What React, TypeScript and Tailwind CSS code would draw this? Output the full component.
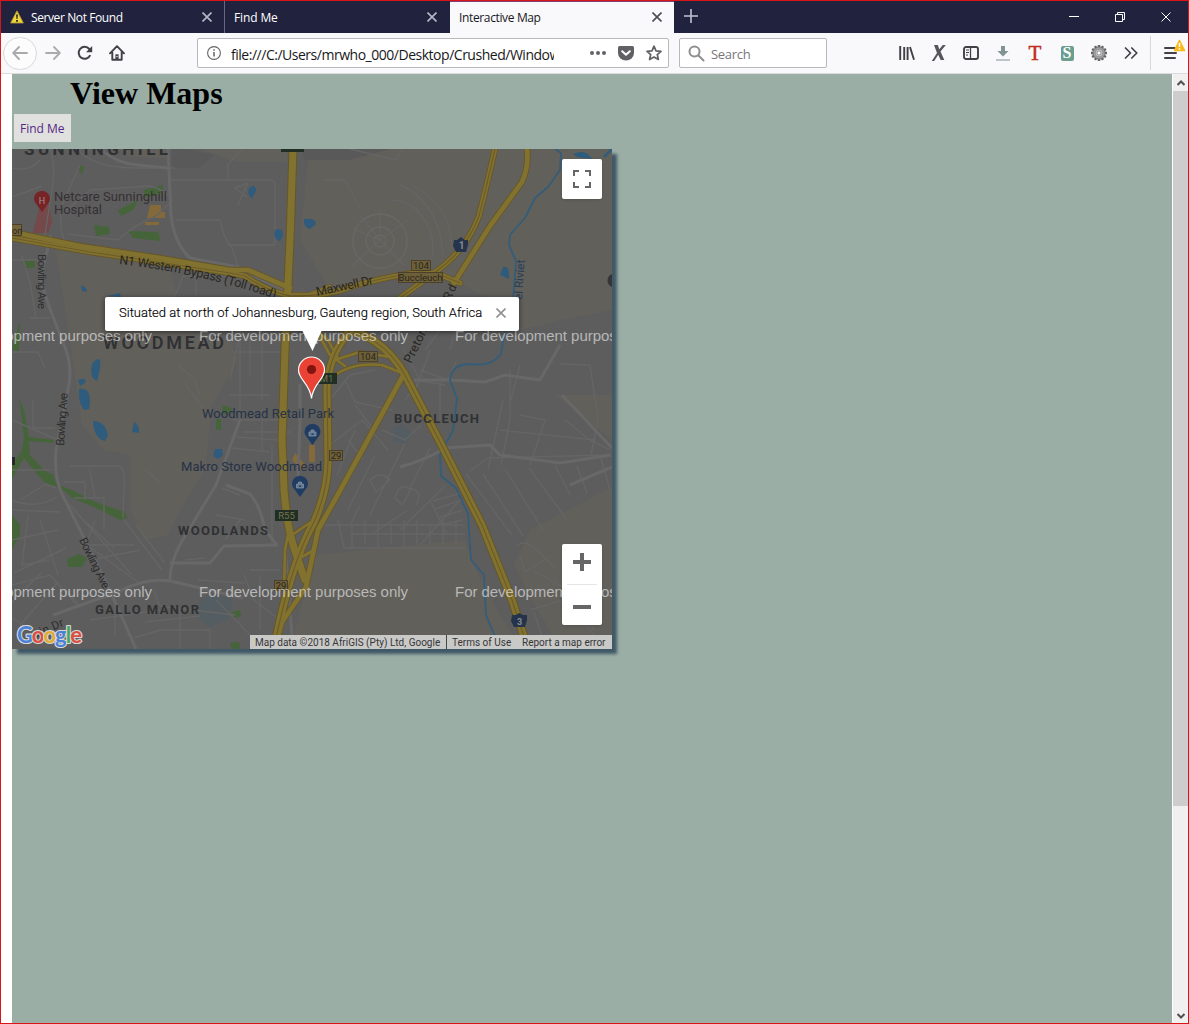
import React from "react";

const ui = "font-['Open_Sans','Noto_Sans',sans-serif]";

function Cross({ color, size = 10, w = 1.6 }: { color: string; size?: number; w?: number }) {
  return (
    <svg width={size} height={size} viewBox="0 0 10 10" stroke={color} strokeWidth={w} fill="none">
      <path d="M.5 .5 9.5 9.5M9.5 .5 .5 9.5" />
    </svg>
  );
}

function TabBar() {
  return (
    <div className={`flex h-8 shrink-0 bg-[#20223e] text-[12px] text-white ${ui}`}>
      <div className="flex w-[224px] items-center border-r border-[#66687d] pl-[9px] pr-3">
        <svg width="14" height="14" viewBox="0 0 14 14" className="mr-[7px]">
          <path d="M7 .8 13.4 13H.6Z" fill="#f1d43a" stroke="#a99335" strokeWidth=".9" strokeLinejoin="round" />
          <path d="M6.1 4.5h1.8L7.5 9h-1ZM6.1 10h1.8v1.7H6.1Z" fill="#222" />
        </svg>
        <span className="mt-0.5 whitespace-nowrap tracking-[-0.400px]">Server Not Found</span>
        <span className="ml-auto"><Cross color="#b7b8c7" /></span>
      </div>
      <div className="flex w-[225px] items-center pl-[9px] pr-[13px]">
        <span className="mt-0.5 tracking-[-0.120px]">Find Me</span>
        <span className="ml-auto"><Cross color="#b7b8c7" /></span>
      </div>
      <div className="flex w-[224px] items-center border-t border-[#813f76] bg-[#f9f9fb] pl-[9px] pr-[12px] text-[#17171b]">
        <span className="tracking-[-0.360px]">Interactive Map</span>
        <span className="ml-auto pb-px"><Cross color="#4b4b52" /></span>
      </div>
      <svg width="14" height="14" viewBox="0 0 14 14" className="ml-[10px] mt-2" stroke="#c1c2d0" strokeWidth="1.6">
        <path d="M7 0v14M0 7h14" />
      </svg>
      <div className="ml-auto flex">
        <div className="flex w-[46px] items-center justify-center"><svg width="10" height="10"><path d="M0 4.5h10" stroke="#fff" /></svg></div>
        <div className="flex w-[46px] items-center justify-center">
          <svg width="10" height="10" fill="none" stroke="#fff"><path d="M.5 2.5h7v7h-7ZM2.5 2.5v-2h7v7h-2" /></svg>
        </div>
        <div className="flex w-[45px] items-center justify-center"><Cross color="#fff" w={1} /></div>
      </div>
    </div>
  );
}

function Slot({ children }: { children: React.ReactNode }) {
  return <div className="flex w-8 items-center justify-center">{children}</div>;
}

const teeth = Array.from({ length: 12 }, (_, i) => i * 30);

function Toolbar() {
  return (
    <div className={`flex h-[41px] shrink-0 items-center border-b border-[#dcdcde] bg-[#f9f9fb] ${ui}`}>
      <div className="ml-[2px] flex h-[33px] w-[34px] items-center justify-center rounded-full border border-[#d8d8da] bg-[#fcfcfd]">
        <svg width="16" height="14" viewBox="0 0 16 14" fill="none" stroke="#a9a9ab" strokeWidth="1.8" strokeLinecap="round" strokeLinejoin="round"><path d="M15 7H1.5M7 1 1.2 7 7 13" /></svg>
      </div>
      <Slot>
        <svg width="16" height="14" viewBox="0 0 16 14" fill="none" stroke="#ababad" strokeWidth="1.8" strokeLinecap="round" strokeLinejoin="round"><path d="M1 7h13.5M9 1l5.8 6L9 13" /></svg>
      </Slot>
      <Slot>
        <svg width="16" height="16" viewBox="0 0 16 16" fill="none" stroke="#414146" strokeWidth="2"><path d="M13.2 10.2A6 6 0 1 1 12.3 4l1.2 1.3" /><path d="M15.2 1v6.2H9Z" fill="#414146" stroke="none" /></svg>
      </Slot>
      <Slot>
        <svg width="16" height="16" viewBox="0 0 16 16" fill="none" stroke="#414146" strokeWidth="1.9" strokeLinejoin="round" strokeLinecap="round"><path d="M1 8.3 8 1.2l7 7.1M3.3 7v7.8h9.4V7" /><path d="M6.4 14V9.3h3.2V14Z" fill="#414146" stroke="none" /><path d="M7.6 11.6h.8" stroke="#fff" strokeWidth=".8" /></svg>
      </Slot>
      <div className="ml-16 flex h-[30px] w-[472px] items-center rounded-[2px] border border-[#b9b9bb] bg-white">
        <svg width="14" height="14" viewBox="0 0 14 14" className="ml-[9px] shrink-0" fill="none" stroke="#636367"><circle cx="7" cy="7" r="6.4" strokeWidth="1.1" /><path d="M7 6v4.4M7 3.2v1.5" strokeWidth="1.5" /></svg>
        <div className="mt-0.5 ml-[10px] w-[323px] shrink-0 overflow-hidden whitespace-nowrap text-[14px] tracking-[-0.480px] text-[#18181b]">file:///C:/Users/mrwho_000/Desktop/Crushed/Windows</div>
        <svg width="18" height="6" className="ml-[35px] shrink-0" fill="#636367"><circle cx="3" cy="3" r="2" /><circle cx="9" cy="3" r="2" /><circle cx="15" cy="3" r="2" /></svg>
        <svg width="16" height="15" viewBox="0 0 16 15" className="ml-[11px] shrink-0"><path d="M1.5 0h13Q16 0 16 1.6V7a8 7.5 0 0 1-16 0V1.6Q0 0 1.5 0Z" fill="#606065" /><path d="m4.2 5.2 3.8 3.6 3.800-3.600" fill="none" stroke="#fff" strokeWidth="2" strokeLinecap="round" strokeLinejoin="round" /></svg>
        <svg width="16" height="16" viewBox="0 0 16 16" className="ml-3 shrink-0" fill="none" stroke="#606065" strokeWidth="1.7" strokeLinejoin="round"><path d="m8 1.2 2 4.600 5 .5-3.700 3.300 1.100 4.900L8 12l-4.400 2.500 1.100-4.900L1 6.300l5-.5Z" /></svg>
      </div>
      <div className="ml-[10px] flex h-[30px] w-[148px] items-center rounded-[2px] border border-[#b9b9bb] bg-white pl-2 text-[13px] text-[#77777a]">
        <svg width="17" height="17" viewBox="0 0 17 17" className="mr-[6px]" fill="none" stroke="#8e8e90" strokeWidth="2" strokeLinecap="round"><circle cx="6.5" cy="6.5" r="5" /><path d="m10.5 10.5 5 5" /></svg>
        <span className="mt-[3px] tracking-[-0.300px]">Search</span>
      </div>
      <div className="ml-[64px] flex">
        <Slot><svg width="16" height="14" viewBox="0 0 16 14" stroke="#414146" strokeWidth="1.9" fill="none"><path d="M1.200 0v14M5.200 1v13M8.600 1v13M11 1l4 12.700" /></svg></Slot>
        <Slot><svg width="16" height="16" viewBox="0 0 16 16"><path d="M3 0h3.800L8.300 4.200 11.800 0h3L9.500 6.600 13.300 15H9.700L7.200 9.800 3.200 16H.8L6 8Z" fill="#55555a" /></svg></Slot>
        <Slot><svg width="16" height="14" viewBox="0 0 16 14" fill="none" stroke="#414146"><rect x="1" y="1" width="14" height="12" rx="2" strokeWidth="1.9" /><path d="M7.500 1v12" strokeWidth="1.3" /><path d="M3 4h3M3 6.500h3M3 9h2" strokeWidth="1.1" /></svg></Slot>
        <Slot><svg width="14" height="16" viewBox="0 0 14 16" fill="#819491"><path d="M5 1h4v5h3.500L7 11.600 1.500 6H5ZM0 14.500h14v1H0Z" /></svg></Slot>
        <Slot><span className="mt-[-3px] h-5 font-['Liberation_Serif',serif] text-[21px] leading-[22px] text-[#c02c1f] [-webkit-text-stroke:.5px_#c02c1f]">T</span></Slot>
        <Slot><span className="flex h-[15px] w-[13px] items-center justify-center rounded-[2px] bg-[#6b9e8e] font-['Liberation_Serif',serif] text-[16px] leading-none font-bold text-white">S</span></Slot>
        <Slot>
          <svg width="16" height="16" viewBox="-8 -8 16 16">
            {teeth.map((a) => <rect key={a} x="-1.200" y="-8" width="2.400" height="3" fill="#626264" transform={`rotate(${a})`} />)}
            <circle r="6.200" fill="#9c9c9e" stroke="#68686a" strokeWidth=".8" /><circle r="3.800" fill="#c9c9cb" stroke="#838385" strokeWidth=".6" /><circle r="2" fill="#fff" stroke="#777" strokeWidth=".7" />
          </svg>
        </Slot>
        <Slot><svg width="14" height="12" viewBox="0 0 14 12" fill="none" stroke="#414146" strokeWidth="1.700" strokeLinecap="round" strokeLinejoin="round"><path d="m1.500 1 5 5-5 5M7.800 1l5 5-5 5" /></svg></Slot>
      </div>
      <div className="ml-[3px] h-[34px] w-px bg-[#d8d8db]" />
      <svg width="24" height="30" viewBox="0 0 24 30" className="ml-[12px]">
        <path d="M2 10h10M2 15h11M2 20h10" stroke="#414146" strokeWidth="2" strokeLinecap="round" />
        <path d="m16.500 2.500 5 10H11.500Z" fill="#f9b91b" stroke="#f9b91b" strokeWidth="1.500" strokeLinejoin="round" />
        <path d="M16.500 5v4M16.500 10.300v1.400" stroke="#fff" strokeWidth="1.500" />
      </svg>
    </div>
  );
}

const localRoads = [
  "M50 149Q56 165 52 190L44 240M78 149Q90 166 130 168H175M12 168Q30 172 40 160M12 197 42 186M80 165 62 205Q58 232 66 242L140 252 176 260",
  "M66 210Q80 200 90 190L150 186Q166 190 172 201L156 216Q134 225 118 240L68 234",
  "M168 180H270Q275 180 275 186V245H230M228 180V164L242 149M247 197 235 188 248 183 238 205",
  "M176 220H220Q224 240 232 248L238 266M12 260H38M22 256 30 282 36 318M30 318H50M175 296 183 276H270M196 276V296",
  "M12 352H38L45 368M33 400V428H55M12 420 58 440M12 470H50M20 500 46 484 56 488M12 500Q35 510 57 497",
  "M70 466H120Q126 470 124 488L123 518M64 482H85V500M74 498H104V530M90 470 95 498M78 515 114 548M70 505 132 575M95 520 86 545M80 545H134M90 560 140 550M80 540 138 582",
  "M12 510 60 512M12 540 58 530M28 515 22 565 50 560M40 520 58 575M14 573 66 548M12 585 50 575 76 604M12 602 42 572M20 625 58 582M12 618 60 646M66 590 80 606",
  "M124 520 162 570M136 525 165 563M115 600V635M90 620 160 610M134 638 160 630H210V649M154 590 160 606 235 615M180 607V649M145 622 200 616",
  "M230 380 236 350 242 330M240 330V420M232 420H280M236 352H280M250 330V375M262 330V400M230 395H270M243 432H290M236 437 278 440M262 410V450M232 448 270 452",
  "M178 365 195 380 200 395M186 385 203 408M145 470 160 482M272 445V545M222 488 240 495M216 515 245 520M240 520 225 540",
  "M250 570H280M260 575V630M244 575 254 600 280 620M216 600 260 645M185 560 205 558M198 580 245 583",
  "M350 149 396 160 402 149M324 180H345L360 208M360 215 380 240 352 266M380 240V210M380 240 408 220M380 240 405 266M380 240 356 230",
  "M390 200Q422 200 432 238Q434 254 430 265M400 185Q440 202 443 256M412 185Q450 205 452 245",
  "M378 330 370 320H415M440 300V330L425 350M455 306V330L450 350M404 350 420 380 405 400M430 350 415 392",
  "M330 400 350 375 375 370M345 380 355 402 392 410M355 405 374 430M415 380 445 385M420 370 448 380 456 362M440 382V420",
  "M330 445 362 420 388 450M348 440 363 459M382 430 405 440 421 425M355 430 337 475M375 455 348 510M405 443 370 515M430 448 410 488Q424 492 416 505M370 480Q380 470 390 480L376 492ZM395 498Q400 480 411 490L402 505ZM360 505 350 526M408 510 370 535M446 485 400 530M460 500 420 545",
  "M323 525H465M338 520 344 548H465M352 525V548M365 520V544M378 520V548M391 523V544M404 520V548M417 520V545M430 525V545M443 520V544M456 520V545M350 534H465",
  "M433 501 462 493M435 509 462 500M438 518 463 510M441 525 463 520M430 500 447 535",
  "M510 370V420L501 465M520 365 510 403M503 400 488 470M520 415 545 420 530 465M560 364 590 365 598 420 590 460M500 430 595 440M565 420 590 440 610 450",
  "M470 471 488 458 610 455M466 474 512 535M483 474 523 536M505 469 543 530M529 468 567 520M555 465 570 495M577 466 587 493M600 455 610 490",
  "M518 545Q526 540 534 548L555 567M520 555 525 572 550 556M534 571 568 590 594 630M556 590 524 590M530 610 563 600M534 612 546 649M570 600 600 645",
];

const mediumRoads = [
  "M100 149Q118 164 138 165L168 168",
  "M168 149 171 215Q174 243 190 258L238 267Q260 280 288 292",
  "M51 235 40 280Q50 310 62 340Q74 365 68 390L56 450Q54 474 61 492L90 550Q106 580 136 649",
  "M53 615 120 591Q152 574 183 584L243 598M170 580Q170 560 185 536L216 485 240 420M226 485 250 494Q260 505 265 530L277 545",
  "M300 384 300 420 298 480M170 563H210L224 546 278 545",
  "M400 467Q426 460 445 448L490 445 500 455 560 463 611 455",
  "M570 485 612 467",
  "M414 380H450L485 382 505 375 540 380 560 345",
  "M285 545 293 649M562 395 612 448",
];

const highways = [
  "M12 238 90 252 170 264 230 273 245 276Q265 290 290 296Q330 296 350 287Q384 277 420 272L436 273 460 283",
  "M12 232 80 246 160 258 230 270 248 270 290 288",
  "M293 149 290 240 285 350 282 440 284 490Q287 525 293 545L305 580",
  "M495 149Q488 180 479 216Q466 251 434 273L400 298",
  "M527 149Q529 167 522 182L490 226 454 283",
  "M330 286 310 294H292",
  "M350 331Q328 355 327 390L328 460Q328 490 314 522Q290 565 274 649",
  "M330 325Q381 332 405 375L440 442 482 525 512 600 528 649",
  "M405 372 342 487 318 530 306 587 282 622 277 640",
  "M331 378Q350 362 382 365L407 375M316 330 330 355 345 366",
  "M310 325 328 340 338 359L360 352 390 357",
  "M292 535 311 522M290 525 285 550 284 590M290 525 302 570",
  "M304 575 300 558 314 550",
];

const branch = (i: number) => i === 5 || i > 8;
const wide = (i: number) => i === 2 || i === 6 || i === 7;

const water = [
  "M249 188q7-5 7 3l-4 7q-5-2-3-10Z", "M275 230q8-3 8 5l-3 6q-8-2-5-11Z", "M304 219q12-1 12 5l-6 5q-7-2-6-10Z",
  "M92 364q10-12 8 5l-3 12q-8-3-5-17Z", "M78 380q10-3 7 3l-5 3ZM79 389q14-2 10 20l-5 1q-6-7-5-21Z",
  "M93 421q12 0 15 14l-3 6q-11-2-12-20Z", "M134 422q6 4 5 11l-7-1ZM215 449h7l1 6-5 4-5-3Z",
  "M503 267q7-2 6 12l-9-4ZM573 154q13-6 19 5l-15-2ZM108 296l12-3 1 4ZM81 285l5 3 1 4-5-1Z",
];

const park = [
  "M19 398 24 410 29 437 54 440 53 443 29 441 30 455 44 470 53 475 56 484 72 490 95 502 125 512 127 518 120 520 94 507 72 498 60 487 48 485 37 474 24 458 12 479V465L22 450 24 438Z",
  "M12 515 20 525 20 536 12 549ZM67 559l12-5 8 4-5 9H68ZM80 165l4 2-2 7-3-3ZM12 350 20 321 19 351Z",
  "M94 225l15 2 1 7-14 2ZM128 231l30 1 3 9-28-3ZM118 210l20-10-5 10-12 6ZM143 190l20-5v8l-17 5ZM24 260h11v8H24ZM222 405l10 3-3 6h-6ZM216 419h5v11h-5ZM232 612l8-2 1 6-7 2ZM230 643l9-1 1 7h-8Z",
];

function MapLabel({ x, y, w, size, children, fill = "#303133", weight = 400, rotate }: { x: number; y: number; w: number; size: number; children: string; fill?: string; weight?: number; rotate?: number }) {
  return (
    <text x={x} y={y} fontSize={size} textLength={w} fill={fill} fontWeight={weight} transform={rotate === undefined ? undefined : `rotate(${rotate} ${x} ${y})`}>
      {children}
    </text>
  );
}

function Shield({ x, y, w, children, green = false }: { x: number; y: number; w: number; children: string; green?: boolean }) {
  return (
    <g>
      <rect x={x + 0.5} y={y + 0.5} width={w} height="10" fill={green ? "#202e23" : "#6d6038"} stroke={green ? "#202e23" : "#4a402c"} />
      <text x={x + w / 2 + 0.5} y={y + 9.2} fontSize="9.5" textAnchor="middle" fill={green ? "#74754f" : "#2b261e"}>{children}</text>
    </g>
  );
}

function Pin({ x, y, hospital = false }: { x: number; y: number; hospital?: boolean }) {
  return (
    <g transform={`translate(${x} ${y})`}>
      <path d="M0 12 -5 5A8 8 0 1 1 5 5Z" fill={hospital ? "#762426" : "#203c62"} />
      {hospital ? <text x="0" y="3.5" fontSize="9" textAnchor="middle" fill="#a9908d">H</text> : <path d="M-3.500-1h7v4h-7ZM-1.500-1v-2h3v2" fill="#8090a1" fillOpacity=".7" stroke="#8090a1" strokeWidth=".800" />}
      {!hospital && <path d="M-1 .5h2v1.500h-2Z" fill="#203c62" />}
    </g>
  );
}

function MapCanvas() {
  return (
    <svg width="600" height="500" viewBox="12 149 600 500" className="block font-[Roboto,sans-serif]">
      <rect x="12" y="149" width="600" height="500" fill="#5d5d5d" />
      <g fill="#62605b">
        <path d="M55 245 170 270 178 300 180 330 230 340 238 360 212 405 205 470 180 510 168 535 145 540 130 510V455L104 450 82 425 70 340Z" />
        <path d="M310 149H612V310L560 320 520 330 490 300 445 275 370 280 330 290 300 240 305 190Z" />
        <path d="M315 555 465 540 480 580 520 649H290L306 590ZM530 530 612 487V649H560L532 600 514 565ZM555 395 612 395V440ZM120 149h45l2 10-40-3ZM200 149h87v13h-50Z" />
      </g>
      <path d="M185 149 215 155 198 168H172V149ZM302 149H390L350 160H304Z" fill="#595959" />
      <g fill="#456439">{park.map((d) => <path key={d} d={d} />)}</g>
      <path d="M40 204h9l3 18-4 11H33Z" fill="#75484a" />
      <path d="M150 205h11v7h4v6h-18ZM145 222h14v3h-14ZM295 453l10 12-3 5-10-10ZM309 445h6v17h-6Z" fill="#84693a" />
      <path d="M200 600q13-9 33 0l-5 20-20 7-10-10ZM393 427l10-2 10 9-8 10-12-3Z" fill="#545d61" />
      <g fill="none" stroke="#656565" strokeWidth="1.4" strokeLinejoin="round">{localRoads.map((d) => <path key={d} d={d} />)}</g>
      <g fill="none" stroke="#696865" strokeWidth="1.3"><circle cx="380" cy="241" r="27" /><circle cx="380" cy="241" r="14" /><circle cx="380" cy="241" r="6" /></g>
      <g fill="none" stroke="#686869" strokeWidth="3" strokeLinejoin="round">{mediumRoads.map((d) => <path key={d} d={d} />)}</g>
      <g fill="#2f5b7c">{water.map((d) => <path key={d} d={d} />)}</g>
      <path d="M555 149 561 153 560 170 548 187 535 198 525 218 510 235 509 245 516 261 513 300 505 330 501 354Q492 367 471 364 451 364 450 380L457 399 453 430 440 455 441 476 456 488 468 514 471 560 484 575 486 615 494 634 506 649" fill="none" stroke="#345d79" strokeWidth="1.8" strokeLinejoin="round" />
      <path d="M604 157 612 149" stroke="#345d79" strokeWidth="3" />
      <g fill="none" strokeLinejoin="round" strokeLinecap="round">
        {highways.map((d, i) => <path key={`edge-${d}`} d={d} stroke="#665628" strokeWidth={branch(i) ? 4 : wide(i) ? 9 : 6.5} />)}
        {highways.map((d, i) => <path key={`road-${d}`} d={d} stroke="#82722f" strokeWidth={branch(i) ? 2.6 : wide(i) ? 7 : 4.7} />)}
        {highways.filter((_, i) => i === 0 || i === 3 || i === 6 || i === 7).map((d) => <path key={`line-${d}`} d={d} stroke="#6d5c27" strokeWidth="1.2" />)}
      </g>
      <path d="M281 149h23v3h-23Z" fill="#202e23" />
      <path d="M612 274a7 7 0 0 0 0 13Z" fill="#353637" />

      <MapLabel x={24} y={154.5} w={144} size={17} weight={700}>SUNNINGHILL</MapLabel>
      <Pin x={42} y={200} hospital />
      <MapLabel x={54} y={201} w={113} size={13} fill="#363034">Netcare Sunninghill</MapLabel>
      <MapLabel x={54} y={214} w={48} size={13} fill="#363034">Hospital</MapLabel>
      <rect x="5" y="224.5" width="16.500" height="11" fill="#75653a" stroke="#4a402c" />
      <text x="12" y="233.500" fontSize="9" fill="#2b261e">on</text>
      <text x="38" y="254" fontSize="11.500" textLength="55" fill="#2d2d2d" transform="rotate(90 38 254)">Bowling Ave</text>
      <path id="bypass" d="M119 264Q200 273 276 299" fill="none" />
      <text fontSize="12.500" fill="#292723"><textPath href="#bypass" textLength="160">N1 Western Bypass (Toll road)</textPath></text>
      <MapLabel x={317} y={296} w={58} size={12.5} rotate={-12} fill="#292723">Maxwell Dr</MapLabel>
      <MapLabel x={450} y={301} w={16} size={12} rotate={-64} fill="#292723">Rd</MapLabel>
      <MapLabel x={411} y={364} w={45} size={12.5} rotate={-64} fill="#292723">Pretoria</MapLabel>
      <text x="522" y="300" fontSize="11.500" textLength="40" fill="#283d57" transform="rotate(-86 522 300)">el Riviet</text>
      <path d="M454 240h3l4-3 4 3h3v5l-2 7h-10l-3-6Z" fill="#25344a" /><text x="461.500" y="249" fontSize="10" fontWeight="700" textAnchor="middle" fill="#858b95">1</text>
      <Shield x={411} y={260} w={19}>104</Shield><Shield x={398} y={272} w={44}>Buccleuch</Shield><Shield x={358} y={351} w={19}>104</Shield>
      <Shield x={316} y={373} w={20} green>M1</Shield><Shield x={329} y={450} w={13}>29</Shield><Shield x={275} y={510} w={22} green>R55</Shield><Shield x={274} y={580} w={13}>29</Shield>
      <MapLabel x={103} y={349} w={121} size={18} weight={600} fill="#303134">WOODMEAD</MapLabel>
      <text x="64" y="446" fontSize="11.500" textLength="53" fill="#2d2d2d" transform="rotate(-86 64 446)">Bowling Ave</text>
      <text x="79" y="540" fontSize="11.500" textLength="55" fill="#2d2d2d" transform="rotate(64 79 540)">Bowling Ave</text>
      <text x="35" y="638" fontSize="11.500" textLength="32" fill="#2d2d2d" transform="rotate(-23 35 638)">ain Dr</text>
      <MapLabel x={202} y={418} w={132} size={13} fill="#263246">Woodmead Retail Park</MapLabel>
      <Pin x={312.5} y={433} />
      <MapLabel x={181} y={471} w={141} size={13} fill="#263246">Makro Store Woodmead</MapLabel>
      <Pin x={300} y={485} />
      <MapLabel x={394} y={423} w={85} size={13} weight={700}>BUCCLEUCH</MapLabel>
      <MapLabel x={178} y={535} w={90} size={13} weight={700}>WOODLANDS</MapLabel>
      <MapLabel x={95} y={614} w={104} size={13} weight={700}>GALLO MANOR</MapLabel>
      <path d="M512 615h4l3-2 4 2h4v5l-2 7h-11l-3-6Z" fill="#25344a" /><text x="519.500" y="625" fontSize="9" fontWeight="700" textAnchor="middle" fill="#858b95">3</text>
      <path d="M12 457h3v8h-3Z" fill="#282828" />
      <g fill="#fff" fillOpacity=".56" fontSize="15" fontFamily="'Liberation Sans',sans-serif">
        {[341, 597].map((y) => [-57, 199, 455].map((x) => <text key={`${x}-${y}`} x={x} y={y} textLength="209">For development purposes only</text>))}
      </g>
      <path d="M311.500 398.500C310 383 298.500 380 298.500 370A13 13 0 0 1 324.500 370C324.500 380 313 383 311.500 398.500Z" fill="#ea4335" stroke="#fff" strokeWidth="1.200" />
      <circle cx="311.500" cy="369.500" r="4.600" fill="#811411" />
      <text x="17" y="642.500" fontSize="22" textLength="65" fontFamily="Lato,sans-serif" fontWeight="700" stroke="#d8d8d8" strokeWidth="2.200" paintOrder="stroke" strokeLinejoin="round">
        <tspan fill="#4a82d7">G</tspan><tspan fill="#d95043">o</tspan><tspan fill="#dfad32">o</tspan><tspan fill="#4a82d7">g</tspan><tspan fill="#4ca463">l</tspan><tspan fill="#d95043">e</tspan>
      </text>
    </svg>
  );
}

function MapPanel() {
  return (
    <div className="relative h-[500px] w-[600px] shadow-[5px_5px_3px_#405967]">
      <div className="overflow-hidden"><MapCanvas /></div>
      <div className="absolute top-[148px] left-[93px] flex h-[34px] w-[414px] items-center rounded-[2px] bg-white pb-[2px] pl-[14px] font-[Roboto,sans-serif] text-[13px] font-light text-black shadow-[0_1px_5px_rgba(0,0,0,.55)]">
        <span className="w-[363px] whitespace-nowrap [-webkit-text-stroke:.15px_#000]">Situated at north of Johannesburg, Gauteng region, South Africa</span>
        <span className="ml-[14px]"><Cross color="#919191" /></span>
        <svg width="20" height="21" className="absolute top-[33px] left-[197px]"><path d="M0 0h20l-9.500 21Z" fill="#fff" /></svg>
      </div>
      <div className="absolute top-[10px] right-[10px] flex h-10 w-10 items-center justify-center rounded-[2px] bg-white shadow-sm">
        <svg width="18" height="18" fill="none" stroke="#666" strokeWidth="2"><path d="M1 6V1h5M12 1h5v5M17 12v5h-5M6 17H1v-5" /></svg>
      </div>
      <div className="absolute right-[10px] bottom-6 flex h-[81px] w-10 flex-col items-center rounded-[2px] bg-white shadow-sm">
        <div className="flex h-10 items-center pb-1"><svg width="18" height="18" fill="#666"><path d="M7 0h4v7h7v4h-7v7H7v-7H0V7h7Z" /></svg></div>
        <div className="h-px w-[30px] bg-[#e6e6e6]" />
        <div className="flex h-10 items-center pt-1"><div className="h-1 w-[18px] bg-[#666]" /></div>
      </div>
      <div className="absolute right-0 bottom-0 flex h-[14px] w-[362px] items-center bg-[#c9c9c8] font-[Roboto,sans-serif] text-[10px] leading-[14px] whitespace-nowrap text-[#363636]">
        <span className="flex h-[14px] w-[197px] border-r border-[#484848] pt-px pl-[5px]">Map data ©2018 AfriGIS (Pty) Ltd, Google</span>
        <span className="w-[75px] pt-[2px] pl-[5px]">Terms of Use</span>
        <span className="pt-[2px]">Report a map error</span>
      </div>
    </div>
  );
}

export default function App() {
  return (
    <div className="flex h-[1024px] w-[1189px] flex-col overflow-hidden border border-[#d91518] bg-white">
      <TabBar />
      <Toolbar />
      <div className="flex min-h-0 flex-1">
        <main className="ml-[11px] w-[1160px] bg-[#9baea5]">
          <h1 className="h-10 pl-[58px] font-['Liberation_Serif',serif] text-[32px] leading-[39px] font-bold text-black">View Maps</h1>
          <button className={`ml-[2px] block h-7 w-[57px] bg-[#e0e1df] pt-0.5 text-left text-[12px] text-[#552784] ${ui}`}><span className="pl-[6px]">Find Me</span></button>
          <div className="mt-[7px]"><MapPanel /></div>
        </main>
        <aside className="ml-px flex flex-1 flex-col items-center bg-[#f0f0f0]">
          <div className="flex h-[17px] items-center"><svg width="8" height="6" fill="none" stroke="#505050" strokeWidth="2"><path d="m.500 5 3.500-3.500L7.500 5" /></svg></div>
          <div className="h-[715px] w-full bg-[#cdcdcd]" />
          <div className="mt-auto flex h-[15px] items-center"><svg width="8" height="6" fill="none" stroke="#505050" strokeWidth="2"><path d="m.500 1 3.500 3.500L7.500 1" /></svg></div>
        </aside>
      </div>
    </div>
  );
}
